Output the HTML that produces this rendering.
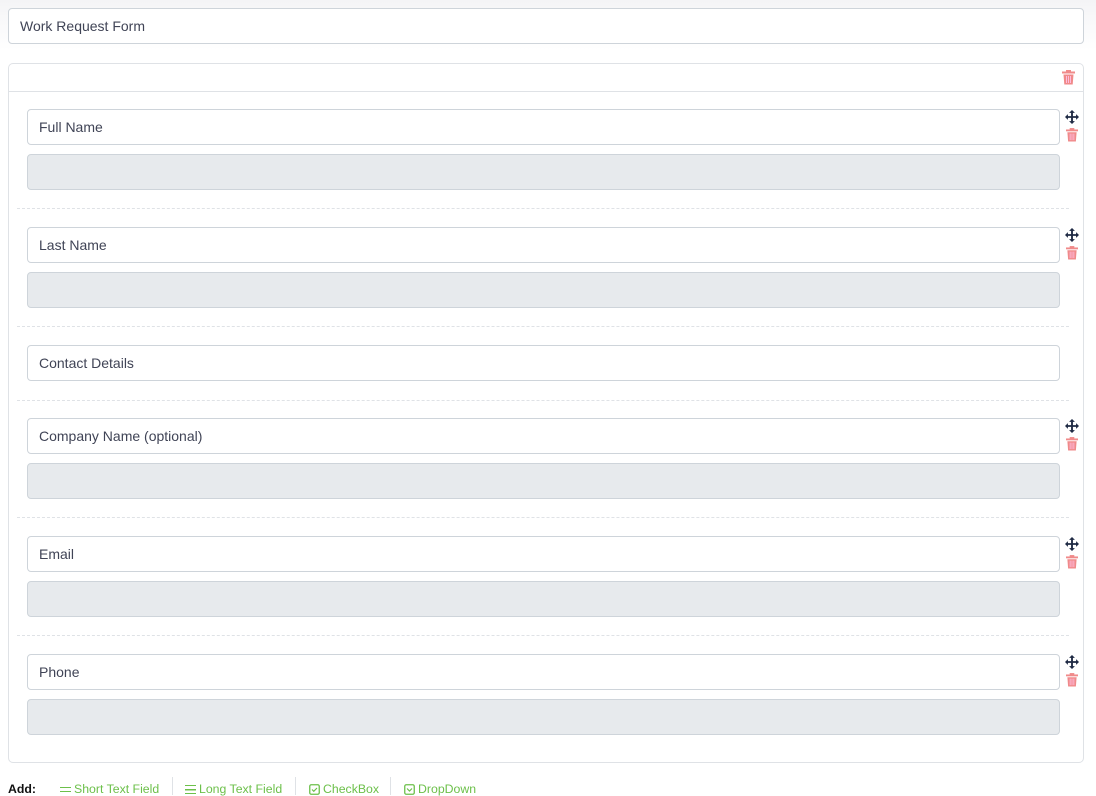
<!DOCTYPE html>
<html><head><meta charset="utf-8"><style>
*{box-sizing:border-box;margin:0;padding:0}
body{width:1096px;height:795px;background:#fff;font-family:"Liberation Sans",sans-serif;color:#333;position:relative;overflow:hidden}
.top{position:absolute;left:0;top:0;width:1096px;height:50px;background:linear-gradient(#f4f4f6,#fff)}
.inp{position:absolute;background:#fff;border:1px solid #ced4da;border-radius:4px;font-size:14px;color:#404456;padding-left:11px;display:flex;align-items:center}
.gray{position:absolute;background:#e7eaed;border:1px solid #ced4da;border-radius:4px}
.card{position:absolute;left:8px;top:63px;width:1076px;height:700px;border:1px solid #dfe2e6;border-radius:5px;background:#fff}
.hl{position:absolute;left:9px;top:91px;width:1074px;border-top:1px solid #dfe2e6}
.sep{position:absolute;left:17px;width:1052px;border-top:1px dashed #dfe2e6}
.ic{position:absolute}
.add{position:absolute;top:782px;font-size:12.3px;color:#6cc04a;display:flex;align-items:center}
.vs{position:absolute;top:777px;height:18px;border-left:1px solid #dfe2e6}
</style></head><body>
<div class="top"></div>
<div class="inp" style="left:8px;top:8px;width:1076px;height:36px">Work Request Form</div>
<div class="card"></div>
<div class="hl"></div>
<svg class="ic" style="left:1062px;top:70px" width="13" height="15" viewBox="0 0 13 15"><rect x="0" y="1.5" width="13" height="2" fill="#f08a8a"/><rect x="4" y="0" width="5" height="2" fill="#f08a8a"/><path d="M1.5 4.5h10l-.8 10h-8.4z" fill="#f08a8a"/><path d="M4.5 6v7M6.5 6v7M8.5 6v7" stroke="#fbd" stroke-width="1"/></svg>

<div id="f"></div>
<script>
var rows=[[109,"Full Name",1],[227,"Last Name",1],[345,"Contact Details",0],[418,"Company Name (optional)",1],[536,"Email",1],[654,"Phone",1]];
var seps=[208,326,400,517,635];
var h="";
rows.forEach(function(r){
h+='<div class="inp" style="left:27px;top:'+r[0]+'px;width:1033px;height:36px">'+r[1]+'</div>';
if(r[2]){
h+='<div class="gray" style="left:27px;top:'+(r[0]+45)+'px;width:1033px;height:36px"></div>';
h+='<svg class="ic" style="left:1065px;top:'+(r[0]+1)+'px" width="14" height="14" viewBox="0 0 12 12"><path d="M6 0L3.5 2.5h1.7v2.7H2.5V3.5L0 6l2.5 2.5V6.8h2.7v2.7H3.5L6 12l2.5-2.5H6.8V6.8h2.7v1.7L12 6 9.5 3.5v1.7H6.8V2.5h1.7z" fill="#1f2a44"/></svg>';
h+='<svg class="ic" style="left:1066px;top:'+(r[0]+19)+'px" width="12" height="14" viewBox="0 0 13 15"><rect x="0" y="1.5" width="13" height="2" fill="#f08a8a"/><rect x="4" y="0" width="5" height="2" fill="#f08a8a"/><path d="M1.5 4.5h10l-.8 10h-8.4z" fill="#f08a8a"/><path d="M4.5 6v7M6.5 6v7M8.5 6v7" stroke="#fbd" stroke-width="1"/></svg>';
}});
seps.forEach(function(y){h+='<div class="sep" style="top:'+y+'px"></div>';});
document.getElementById("f").innerHTML=h;
</script>
<div class="add" style="left:8px;color:#111;font-weight:bold;font-size:12.3px">Add:</div>
<div class="add" style="left:60px"><span style="display:inline-block;width:11px;height:5px;border-top:1.5px solid #6cc04a;border-bottom:1.5px solid #6cc04a;margin-right:3px"></span>Short Text Field</div>
<div class="vs" style="left:172px"></div>
<div class="add" style="left:185px"><span style="display:inline-block;width:11px;height:9px;border-top:1.5px solid #6cc04a;border-bottom:1.5px solid #6cc04a;margin-right:3px;background:linear-gradient(transparent 3px,#6cc04a 3px,#6cc04a 4.5px,transparent 4.5px)"></span>Long Text Field</div>
<div class="vs" style="left:295px"></div>
<div class="add" style="left:309px"><svg width="11" height="11" viewBox="0 0 11 11" style="margin-right:3px"><rect x=".75" y=".75" width="9.5" height="9.5" rx="1.5" fill="none" stroke="#6cc04a" stroke-width="1.3"/><path d="M3 5.5l1.8 1.8L8 4" fill="none" stroke="#6cc04a" stroke-width="1.2"/></svg>CheckBox</div>
<div class="vs" style="left:390px"></div>
<div class="add" style="left:404px"><svg width="11" height="11" viewBox="0 0 11 11" style="margin-right:3px"><rect x=".75" y=".75" width="9.5" height="9.5" rx="1.5" fill="none" stroke="#6cc04a" stroke-width="1.3"/><path d="M3 4.5l2.5 2.5L8 4.5" fill="none" stroke="#6cc04a" stroke-width="1.2"/></svg>DropDown</div>
</body></html>
